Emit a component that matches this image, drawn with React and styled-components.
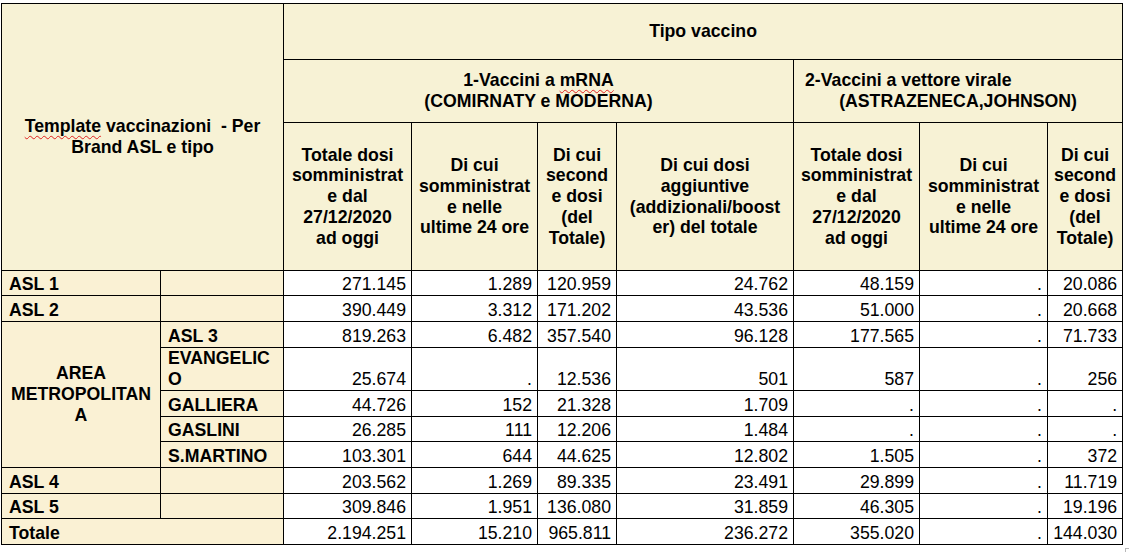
import React from "react";
import styled, { createGlobalStyle } from "styled-components";

const GlobalStyle = createGlobalStyle`
  html, body {
    margin: 0;
    padding: 0;
    background: #ffffff;
  }
  body {
    font-family: "Liberation Sans", Arial, sans-serif;
    color: #000;
  }
`;

const Page = styled.div`
  position: relative;
  width: 1129px;
  height: 552px;
  padding: 3px 0 0 1px;
  box-sizing: border-box;
  overflow: hidden;

  &::after {
    content: "";
    position: absolute;
    left: 1125px;
    top: 548px;
    width: 6px;
    height: 6px;
    border-left: 1px solid #b8b8b8;
    border-top: 1px solid #b8b8b8;
  }
`;

const Sheet = styled.table`
  width: 1121px;
  border-collapse: collapse;
  table-layout: fixed;
  font-size: 17.7px;
`;

const Col = styled.col`
  width: ${(p) => p.$w}px;
`;

const Row = styled.tr`
  height: ${(p) => p.$h}px;
`;

const HeadCell = styled.th`
  background: #f7f2d5;
  border: 1px solid #000;
  font-weight: bold;
  text-align: center;
  vertical-align: middle;
  line-height: 20.8px;
  padding: 0;
  white-space: nowrap;
  overflow: visible;
`;

const Line = styled.span`
  display: block;
  text-align: ${(p) => p.$align || "center"};
  padding-left: ${(p) => p.$indent || 0}px;
`;

const Spell = styled.span`
  text-decoration: underline wavy #e02020;
  text-decoration-thickness: 1px;
  text-underline-offset: 3px;
`;

const LabelCell = styled.th`
  background: #faf1d4;
  border: 1px solid #000;
  font-weight: bold;
  text-align: ${(p) => (p.$center ? "center" : "left")};
  vertical-align: ${(p) => (p.$center ? "middle" : "bottom")};
  line-height: 21px;
  padding: 0 0 0 ${(p) => (p.$center ? 0 : 7)}px;
  white-space: nowrap;
`;

const NumCell = styled.td`
  background: #ffffff;
  border: 1px solid #000;
  text-align: right;
  vertical-align: bottom;
  line-height: 21px;
  padding: 0 5px 0 0;
  white-space: nowrap;
`;

const widths = [159, 123, 128, 126, 79, 177, 126, 128, 75];

const subHeads = [
  ["Totale dosi", "somministrat", "e dal", "27/12/2020", "ad oggi"],
  ["Di cui", "somministrat", "e nelle", "ultime 24 ore"],
  ["Di cui", "second", "e dosi", "(del", "Totale)"],
  ["Di cui dosi", "aggiuntive", "(addizionali/boost", "er) del totale"],
  ["Totale dosi", "somministrat", "e dal", "27/12/2020", "ad oggi"],
  ["Di cui", "somministrat", "e nelle", "ultime 24 ore"],
  ["Di cui", "second", "e dosi", "(del", "Totale)"],
];

const rows = [
  { label: "ASL 1", h: 25, values: ["271.145", "1.289", "120.959", "24.762", "48.159", ".", "20.086"] },
  { label: "ASL 2", h: 26, values: ["390.449", "3.312", "171.202", "43.536", "51.000", ".", "20.668"] },
  { sub: ["ASL 3"], h: 26, area: true, values: ["819.263", "6.482", "357.540", "96.128", "177.565", ".", "71.733"] },
  { sub: ["EVANGELIC", "O"], h: 43, values: ["25.674", ".", "12.536", "501", "587", ".", "256"] },
  { sub: ["GALLIERA"], h: 26, values: ["44.726", "152", "21.328", "1.709", ".", ".", "."] },
  { sub: ["GASLINI"], h: 25, values: ["26.285", "111", "12.206", "1.484", ".", ".", "."] },
  { sub: ["S.MARTINO"], h: 26, values: ["103.301", "644", "44.625", "12.802", "1.505", ".", "372"] },
  { label: "ASL 4", h: 26, values: ["203.562", "1.269", "89.335", "23.491", "29.899", ".", "11.719"] },
  { label: "ASL 5", h: 25, values: ["309.846", "1.951", "136.080", "31.859", "46.305", ".", "19.196"] },
  { total: "Totale", h: 26, values: ["2.194.251", "15.210", "965.811", "236.272", "355.020", ".", "144.030"] },
];

const App = () => {
  return (
    <Page>
      <GlobalStyle />
      <Sheet>
        <colgroup>
          {widths.map((w, i) => (
            <Col key={i} $w={w} />
          ))}
        </colgroup>
        <thead>
          <Row $h={56}>
            <HeadCell rowSpan={3} colSpan={2}>
              <Line>
                <Spell>Template</Spell> vaccinazioni&nbsp; - Per
              </Line>
              <Line>Brand ASL e tipo</Line>
            </HeadCell>
            <HeadCell colSpan={7}>Tipo vaccino</HeadCell>
          </Row>
          <Row $h={63}>
            <HeadCell colSpan={4}>
              <Line>
                1-Vaccini a <Spell>mRNA</Spell>
              </Line>
              <Line>(COMIRNATY e MODERNA)</Line>
            </HeadCell>
            <HeadCell colSpan={3}>
              <Line $align="left" $indent={11}>
                2-Vaccini a vettore virale
              </Line>
              <Line>(ASTRAZENECA,JOHNSON)</Line>
            </HeadCell>
          </Row>
          <Row $h={148}>
            {subHeads.map((lines, i) => (
              <HeadCell key={i}>
                {lines.map((l, j) => (
                  <Line key={j}>{l}</Line>
                ))}
              </HeadCell>
            ))}
          </Row>
        </thead>
        <tbody>
          {rows.map((r, i) => (
            <Row key={i} $h={r.h}>
              {r.label && (
                <>
                  <LabelCell>{r.label}</LabelCell>
                  <LabelCell />
                </>
              )}
              {r.area && (
                <LabelCell rowSpan={5} $center>
                  <Line>AREA</Line>
                  <Line>METROPOLITAN</Line>
                  <Line>A</Line>
                </LabelCell>
              )}
              {r.sub && (
                <LabelCell>
                  {r.sub.map((s, j) => (
                    <Line key={j} $align="left">
                      {s}
                    </Line>
                  ))}
                </LabelCell>
              )}
              {r.total && <LabelCell colSpan={2}>{r.total}</LabelCell>}
              {r.values.map((v, j) => (
                <NumCell key={j}>{v}</NumCell>
              ))}
            </Row>
          ))}
        </tbody>
      </Sheet>
    </Page>
  );
};

export default App;
